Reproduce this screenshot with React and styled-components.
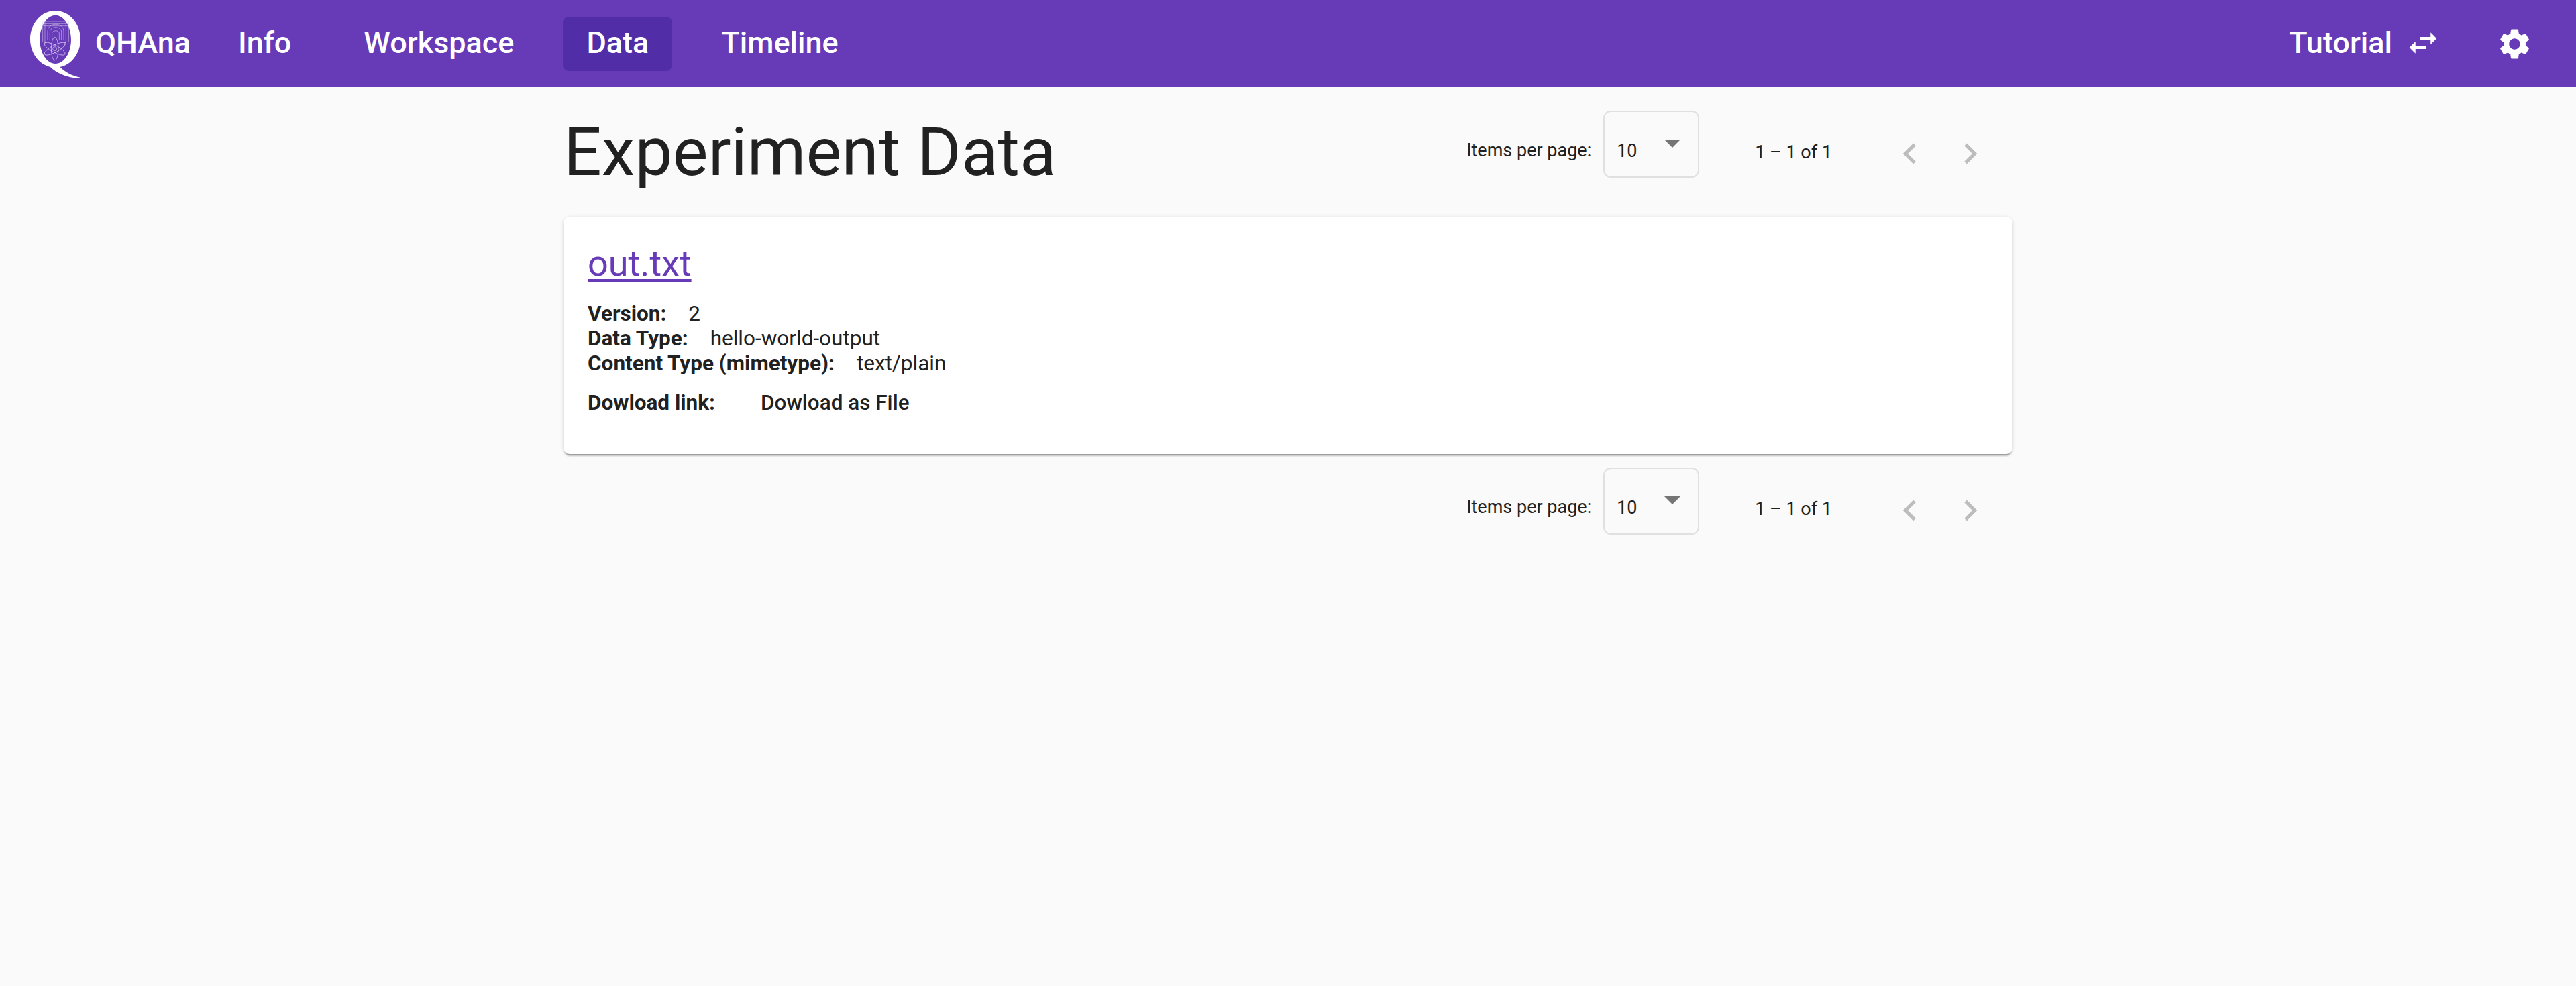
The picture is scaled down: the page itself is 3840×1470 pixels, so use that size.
import styled, { createGlobalStyle } from "styled-components";
import { MdChevronLeft, MdChevronRight, MdSettings, MdSwapHoriz } from "react-icons/md";

const GlobalStyle = createGlobalStyle`
  html, body {
    margin: 0;
    padding: 0;
    background: #fafafa;
    color: #212121;
    font-family: Roboto, "Liberation Sans", sans-serif;
  }
`;

const QhanaLogo = () => (
  <LogoSvg viewBox="0 0 225 303">
    <path
      fillRule="evenodd"
      fill="#fff"
      d="M112 0C50 0 0 57 0 127c0 62 39 113 90 125 25 24 70 50 135 51v-4c-42-8-70-26-92-47 52-9 92-62 92-125C225 57 175 0 112 0zM113 20c38 0 70 49 70 109s-32 108-70 108-70-48-70-108S75 20 113 20z"
    />
    <g fill="none" stroke="#d9cdf0" strokeWidth="2.2">
      <path d="M62 48h104M58 58h112M58 68h112M56 48v90M66 48v90M160 48v90M172 48v90" opacity=".75" />
      <path d="M78 130V92c0-42 72-42 72 0v38M88 130V95c0-28 52-28 52 0v35M98 130V100c0-14 32-14 32 0v30" opacity=".8" />
      <ellipse cx="110" cy="170" rx="16" ry="52" />
      <ellipse cx="110" cy="170" rx="16" ry="52" transform="rotate(62 110 170)" />
      <ellipse cx="110" cy="170" rx="16" ry="52" transform="rotate(-62 110 170)" />
      <circle cx="110" cy="170" r="9" />
      <circle cx="66" cy="145" r="4" />
      <circle cx="156" cy="146" r="4" />
    </g>
  </LogoSvg>
);

const Pager = ({ below }) => (
  <PagerBar $below={below}>
    <PagerLabel>Items per page:</PagerLabel>
    <PageSizeSelect>
      <PageSizeValue>10</PageSizeValue>
      <SelectArrow />
    </PageSizeSelect>
    <PageRange>1 – 1 of 1</PageRange>
    <PageButton disabled aria-label="Previous page">
      <MdChevronLeft />
    </PageButton>
    <PageButton disabled aria-label="Next page">
      <MdChevronRight />
    </PageButton>
  </PagerBar>
);

export default function App() {
  return (
    <>
      <GlobalStyle />
      <TopBar>
        <Brand>
          <QhanaLogo />
          <BrandName>QHAna</BrandName>
        </Brand>
        <NavLinks>
          <NavLink>Info</NavLink>
          <NavLink>Workspace</NavLink>
          <NavLink $active>Data</NavLink>
          <NavLink>Timeline</NavLink>
        </NavLinks>
        <BarActions>
          <TutorialButton>
            Tutorial
            <MdSwapHoriz />
          </TutorialButton>
          <SettingsButton aria-label="Settings">
            <MdSettings />
          </SettingsButton>
        </BarActions>
      </TopBar>
      <Page>
        <HeadingRow>
          <Heading>Experiment Data</Heading>
          <Pager />
        </HeadingRow>
        <DataCard>
          <FileLink href="#">out.txt</FileLink>
          <InfoList>
            <InfoRow>
              <InfoLabel>Version:</InfoLabel>
              <span>2</span>
            </InfoRow>
            <InfoRow>
              <InfoLabel>Data Type:</InfoLabel>
              <span>hello-world-output</span>
            </InfoRow>
            <InfoRow>
              <InfoLabel>Content Type (mimetype):</InfoLabel>
              <span>text/plain</span>
            </InfoRow>
          </InfoList>
          <DownloadRow>
            <InfoLabel>Dowload link:</InfoLabel>
            <DownloadLink>Dowload as File</DownloadLink>
          </DownloadRow>
        </DataCard>
        <Pager below />
      </Page>
    </>
  );
}

const TopBar = styled.header`
  height: 130px;
  background: #673ab7;
  color: #fff;
  display: flex;
  align-items: center;
  padding: 0 64px 0 45px;
  box-sizing: border-box;
`;

const Brand = styled.div`
  display: flex;
  align-items: center;
  gap: 22px;
`;

const LogoSvg = styled.svg`
  width: 75px;
  height: 101px;
  margin-top: 3px;
  flex: none;
`;

const BrandName = styled.span`
  font-size: 45px;
  font-weight: 500;
  line-height: 1;
  margin-bottom: 3px;
`;

const NavLinks = styled.nav`
  display: flex;
  align-items: center;
  gap: 38px;
  margin-left: 36px;
  flex: 1;
`;

const NavLink = styled.a`
  height: 81px;
  box-sizing: border-box;
  padding: 0 35px 3px;
  display: flex;
  align-items: center;
  border-radius: 9px;
  font-size: 45px;
  font-weight: 500;
  background: ${(props) => (props.$active ? "#512da8" : "transparent")};
`;

const BarActions = styled.div`
  display: flex;
  align-items: center;
`;

const TutorialButton = styled.button`
  all: unset;
  display: flex;
  align-items: center;
  gap: 19px;
  margin-right: 82px;
  padding-bottom: 3px;
  font-size: 45px;
  font-weight: 500;
  svg {
    width: 54px;
    height: 54px;
  }
`;

const SettingsButton = styled.button`
  all: unset;
  display: flex;
  svg {
    width: 55px;
    height: 55px;
  }
`;

const Page = styled.main`
  width: 2160px;
  margin: 0 auto;
`;

const HeadingRow = styled.div`
  display: flex;
  justify-content: space-between;
  align-items: flex-start;
  padding-top: 35px;
  margin-bottom: 58px;
`;

const Heading = styled.h1`
  margin: 25px 0 1px;
  font-size: 100px;
  font-weight: 400;
  line-height: 74px;
`;

const PagerBar = styled.div`
  display: flex;
  justify-content: flex-end;
  align-items: flex-start;
  padding-right: 18px;
  margin-top: ${(props) => (props.$below ? "20px" : "0")};
  font-size: 27px;
`;

const PagerLabel = styled.span`
  margin: 43px 18px 0 0;
  line-height: 32px;
`;

const PageSizeSelect = styled.div`
  width: 143px;
  height: 100px;
  box-sizing: border-box;
  border: 2.5px solid #e0e0e0;
  border-radius: 11px;
  padding: 0 26px 0 18px;
  display: flex;
  justify-content: space-between;
  align-items: flex-start;
`;

const PageSizeValue = styled.span`
  margin-top: 42px;
  line-height: 32px;
`;

const SelectArrow = styled.span`
  margin-top: 41px;
  width: 0;
  height: 0;
  border-left: 12px solid transparent;
  border-right: 12px solid transparent;
  border-top: 12px solid #757575;
`;

const PageRange = styled.span`
  margin: 46px 71px 0 83px;
  line-height: 32px;
`;

const PageButton = styled.button`
  all: unset;
  width: 90px;
  height: 100px;
  display: flex;
  align-items: center;
  justify-content: center;
  padding-top: 27px;
  box-sizing: border-box;
  color: #bdbdbd;
  svg {
    width: 62px;
    height: 62px;
  }
`;

const DataCard = styled.section`
  height: 354px;
  box-sizing: border-box;
  padding: 38px 36px 0;
  background: #fff;
  border-radius: 9px;
  box-shadow: 0 4px 3px -2px rgba(0, 0, 0, 0.35), 0 2px 4px 0 rgba(0, 0, 0, 0.1),
    0 0 6px 0 rgba(0, 0, 0, 0.06);
`;

const FileLink = styled.a`
  display: inline-block;
  font-size: 54px;
  line-height: 64px;
  color: #673ab7;
  text-decoration: underline;
  text-decoration-thickness: 4px;
  text-underline-offset: 5px;
`;

const InfoList = styled.div`
  margin-top: 24px;
  font-size: 31.5px;
  line-height: 37px;
`;

const InfoRow = styled.div`
  display: flex;
  gap: 33px;
`;

const InfoLabel = styled.span`
  font-weight: 700;
`;

const DownloadRow = styled.div`
  margin-top: 22px;
  font-size: 31.5px;
  line-height: 37px;
  display: flex;
  gap: 68px;
`;

const DownloadLink = styled.a`
  font-weight: 500;
`;
